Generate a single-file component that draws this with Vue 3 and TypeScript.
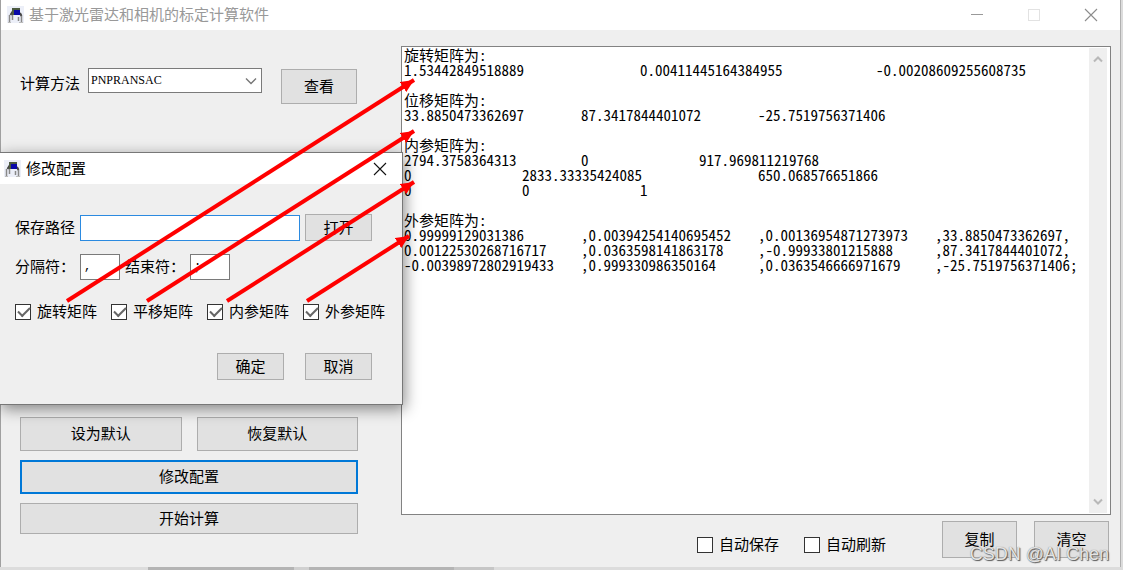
<script setup lang="ts">
import { reactive, ref } from 'vue'

interface Option {
  id: string
  label: string
  checked: boolean
}

const method = ref('PNPRANSAC')
const methods = ['PNPRANSAC']
const savePath = ref('')
const separator = ref(',')
const terminator = ref(';')

const outputs = reactive<Option[]>([
  { id: 'rotation', label: '旋转矩阵', checked: true },
  { id: 'translation', label: '平移矩阵', checked: true },
  { id: 'intrinsic', label: '内参矩阵', checked: true },
  { id: 'extrinsic', label: '外参矩阵', checked: true },
])

const autos = reactive<Option[]>([
  { id: 'auto-save', label: '自动保存', checked: false },
  { id: 'auto-refresh', label: '自动刷新', checked: false },
])

const result = ref(
  [
    '旋转矩阵为:',
    '1.53442849518889\t\t0.00411445164384955\t\t-0.00208609255608735',
    '',
    '位移矩阵为:',
    '33.8850473362697\t87.3417844401072\t-25.7519756371406',
    '',
    '内参矩阵为:',
    '2794.3758364313\t\t0\t\t917.969811219768',
    '0\t\t2833.33335424085\t\t650.068576651866',
    '0\t\t0\t\t1',
    '',
    '外参矩阵为:',
    '0.99999129031386\t,0.00394254140695452\t,0.00136954871273973\t,33.8850473362697,',
    '0.00122530268716717\t,0.0363598141863178\t,-0.99933801215888\t,87.3417844401072,',
    '-0.00398972802919433\t,0.999330986350164\t,0.0363546666971679\t,-25.7519756371406;',
  ].join('\n'),
)

const arrows = [
  { x1: 67, y1: 301, x2: 414, y2: 80 },
  { x1: 147, y1: 301, x2: 414, y2: 131 },
  { x1: 227, y1: 301, x2: 414, y2: 182 },
  { x1: 307, y1: 301, x2: 409, y2: 236 },
]
</script>

<template>
  <div class="desktop">
    <main class="window">
      <header class="titlebar">
        <svg class="app-icon" viewBox="0 0 18 18" aria-hidden="true">
          <rect x="1" y="0" width="17" height="17" fill="#eceff8" />
          <path d="M4.5 9 L7 5 M14 7 L15.5 10" stroke="#444" stroke-width="2" fill="none" />
          <path d="M3.5 9 V16 M6.5 9 V14 M12.5 11 V15 M15.5 10 V16" stroke="#888" stroke-width="1.5" fill="none" />
          <path d="M2 16.5 H5 M13 16.5 H17" stroke="#bbb" />
          <rect x="6" y="2" width="8" height="7" fill="#4c5a40" />
          <rect x="8" y="4" width="6" height="5" fill="#0808a8" />
        </svg>
        <h1 class="title muted">基于激光雷达和相机的标定计算软件</h1>
        <div class="caption">
          <button type="button" class="cap" aria-label="最小化">
            <svg viewBox="0 0 14 14"><path d="M1 6.5 H13" stroke="#999" /></svg>
          </button>
          <button type="button" class="cap" aria-label="最大化" disabled>
            <svg viewBox="0 0 14 14"><rect x="1.5" y="1.5" width="11" height="11" fill="none" stroke="#e2e2e2" /></svg>
          </button>
          <button type="button" class="cap" aria-label="关闭">
            <svg viewBox="0 0 14 14"><path d="M1 1 L13 13 M13 1 L1 13" stroke="#8c8c8c" stroke-width="1.1" /></svg>
          </button>
        </div>
      </header>

      <div class="content">
        <section class="controls">
          <div class="method">
            <label for="method">计算方法</label>
            <div class="combo">
              <select id="method" v-model="method">
                <option v-for="m in methods" :key="m">{{ m }}</option>
              </select>
              <svg class="chevron" viewBox="0 0 12 8" aria-hidden="true">
                <path d="M1 1.5 L6 6.5 L11 1.5" fill="none" stroke="#777" stroke-width="1.4" />
              </svg>
            </div>
            <button type="button" class="btn view">查看</button>
          </div>
          <div class="actions">
            <button type="button" class="btn">设为默认</button>
            <button type="button" class="btn">恢复默认</button>
            <button type="button" class="btn wide focused">修改配置</button>
            <button type="button" class="btn wide start">开始计算</button>
          </div>
        </section>

        <section class="output">
          <div class="result">
            <textarea v-model="result" aria-label="计算结果" wrap="off" spellcheck="false"></textarea>
            <div class="scroll">
              <svg viewBox="0 0 10 7" aria-hidden="true"><path d="M1 5.5 L5 1.5 L9 5.5" /></svg>
              <svg viewBox="0 0 10 7" aria-hidden="true"><path d="M1 1.5 L5 5.5 L9 1.5" /></svg>
            </div>
          </div>
          <footer class="bottom">
            <label v-for="a in autos" :key="a.id" class="check">
              <input v-model="a.checked" type="checkbox" />{{ a.label }}
            </label>
            <button type="button" class="btn big">复制</button>
            <button type="button" class="btn big">清空</button>
          </footer>
        </section>
      </div>
    </main>

    <section class="dialog" role="dialog" aria-labelledby="dialog-title">
      <header class="titlebar dialog-bar">
        <svg class="app-icon" viewBox="0 0 18 18" aria-hidden="true">
          <rect x="1" y="0" width="17" height="17" fill="#eceff8" />
          <path d="M4.5 9 L7 5 M14 7 L15.5 10" stroke="#444" stroke-width="2" fill="none" />
          <path d="M3.5 9 V16 M6.5 9 V14 M12.5 11 V15 M15.5 10 V16" stroke="#888" stroke-width="1.5" fill="none" />
          <path d="M2 16.5 H5 M13 16.5 H17" stroke="#bbb" />
          <rect x="6" y="2" width="8" height="7" fill="#4c5a40" />
          <rect x="8" y="4" width="6" height="5" fill="#0808a8" />
        </svg>
        <h2 id="dialog-title" class="title">修改配置</h2>
        <button type="button" class="cap close" aria-label="关闭">
          <svg viewBox="0 0 14 14"><path d="M1 1 L13 13 M13 1 L1 13" stroke="#111" stroke-width="1.1" /></svg>
        </button>
      </header>
      <form class="form" @submit.prevent>
        <div class="row path-row">
          <label for="path">保存路径</label>
          <input id="path" v-model="savePath" class="field path" type="text" />
          <button type="button" class="btn small">打开</button>
        </div>
        <div class="row mark-row">
          <label for="sep">分隔符：</label>
          <input id="sep" v-model="separator" class="field mark" type="text" />
          <label for="end">结束符：</label>
          <input id="end" v-model="terminator" class="field mark" type="text" />
        </div>
        <div class="row checks">
          <label v-for="o in outputs" :key="o.id" class="check">
            <input v-model="o.checked" type="checkbox" />{{ o.label }}
          </label>
        </div>
        <div class="row confirm">
          <button type="submit" class="btn small">确定</button>
          <button type="button" class="btn small">取消</button>
        </div>
      </form>
    </section>

    <svg class="arrows" width="430" height="310" aria-hidden="true">
      <defs>
        <marker id="head" markerUnits="userSpaceOnUse" markerWidth="14" markerHeight="12" refX="13" refY="6" orient="auto">
          <path d="M0 0 L13 6 L0 12 Z" fill="#f00" />
        </marker>
      </defs>
      <line v-for="(a, i) in arrows" :key="i" v-bind="a" stroke="#f00" stroke-width="4" marker-end="url(#head)" />
    </svg>

    <div class="watermark">CSDN @AI Chen</div>
  </div>
</template>

<style>
body {
  margin: 0;
}
</style>

<style scoped>
* {
  box-sizing: border-box;
}

.desktop {
  position: relative;
  display: flex;
  min-height: 100vh;
  padding: 0 2px 3px 0;
  overflow: hidden;
  background: linear-gradient(
    90deg,
    #dcdcdc 148px,
    #b4b4b4 148px 294px,
    #d0d0d0 294px 309px,
    #b4b4b4 309px 454px,
    #c6c6c6 454px 494px,
    #dcdcdc 494px
  );
  color: #000;
  font-family: "Liberation Sans", "Noto Sans CJK SC", sans-serif;
  font-size: 15px;
  line-height: 20px;
}

button,
input,
select,
textarea {
  margin: 0;
  border-radius: 0;
  color: inherit;
  font: inherit;
}

.window {
  display: flex;
  flex: 1;
  flex-direction: column;
  border-left: 1px solid #a0a0a0;
  border-right: 1px solid #b0b0b0;
  background: #efefef;
}

.titlebar {
  display: flex;
  align-items: center;
  height: 30px;
  padding-left: 5px;
  background: #fff;
}

.app-icon {
  width: 18px;
  height: 18px;
}

.title {
  margin: 0 0 0 5px;
  font-size: 15px;
  font-weight: 400;
}

.muted {
  color: #999;
}

.caption {
  display: flex;
  margin-left: auto;
  padding-right: 1px;
}

.cap {
  display: flex;
  align-items: center;
  justify-content: center;
  width: 57px;
  height: 30px;
  padding: 0;
  border: 0;
  background: transparent;
}

.cap svg {
  width: 14px;
  height: 14px;
}

.content {
  display: flex;
  flex: 1;
}

.controls {
  display: flex;
  flex: 0 0 400px;
  flex-direction: column;
  justify-content: space-between;
  padding: 38px 43px 33px 19px;
}

.method {
  display: flex;
  align-items: flex-start;
}

.method label {
  margin-top: 6px;
}

.combo {
  position: relative;
  width: 174px;
  margin: 0 19px 0 8px;
}

.combo select {
  display: block;
  width: 100%;
  height: 25px;
  padding: 0 24px 2px 2px;
  border: 1px solid #7a7a7a;
  appearance: none;
  background: #fff;
  font-family: "Liberation Serif", serif;
  font-size: 12px;
}

.chevron {
  position: absolute;
  top: 9px;
  right: 5px;
  width: 12px;
  height: 8px;
  pointer-events: none;
}

.btn {
  height: 34px;
  padding: 0;
  border: 1px solid #adadad;
  background: #e1e1e1;
}

.view {
  flex: 1;
  height: 35px;
  margin: 1px 1px 0 0;
}

.actions {
  display: grid;
  grid-template-columns: 1fr 1fr;
  gap: 9px 15px;
}

.wide {
  grid-column: span 2;
}

.start {
  height: 31px;
}

.focused {
  border: 2px solid #0078d7;
}

.output {
  display: flex;
  flex: 1;
  flex-direction: column;
  padding: 16px 9px 9px 0;
}

.result {
  display: flex;
  flex: 1;
  padding: 0 1px;
  border: 1px solid #828282;
  background: #fff;
}

.result textarea {
  flex: 1;
  min-width: 0;
  padding: 0 1px;
  border: 0;
  outline: 0;
  overflow: hidden;
  resize: none;
  background: transparent;
  font-family: "Noto Sans Mono CJK SC", "Noto Sans CJK SC", "Liberation Mono", monospace;
  font-size: 15px;
  font-feature-settings: "hwid";
  line-height: 15px;
  tab-size: 59px;
  white-space: pre;
}

.scroll {
  display: flex;
  flex-direction: column;
  align-items: center;
  justify-content: space-between;
  width: 18px;
  margin: 1px 2px 1px 0;
  padding: 8px 0;
  background: #efefef;
}

.scroll svg {
  width: 10px;
  height: 7px;
  fill: none;
  stroke: #b8b8b8;
  stroke-width: 2;
}

.bottom {
  display: flex;
  align-items: center;
  justify-content: flex-end;
  padding: 6px 2px 0 0;
}

.bottom .check {
  margin: 10px 25px 0 0;
}

.big {
  width: 75px;
  height: 37px;
}

.bottom .check + .check {
  margin-right: 56px;
}

.check + .big {
  margin-right: 17px;
}

.check {
  display: flex;
  align-items: center;
  gap: 6px;
  white-space: nowrap;
}

.check input {
  position: relative;
  width: 16px;
  height: 16px;
  border: 1px solid #333;
  appearance: none;
  background: #fff;
}

.check input:checked::after {
  position: absolute;
  top: 3px;
  left: 2px;
  width: 10px;
  height: 5px;
  border: solid #666;
  border-width: 0 0 2px 2px;
  content: "";
  transform: translateY(-1px) rotate(-45deg);
}

.dialog {
  position: absolute;
  top: 152px;
  left: 0;
  width: 403px;
  border: solid #777;
  border-width: 1px 1px 1px 0;
  background: #efefef;
  box-shadow: 2px 4px 14px rgba(0, 0, 0, 0.45);
}

.dialog-bar {
  height: 31px;
  padding-left: 3px;
}

.close {
  width: 44px;
  margin-left: auto;
}

.form {
  padding: 30px 15px 24px 15px;
}

.row {
  display: flex;
  align-items: center;
}

.path-row {
  gap: 5px;
  padding-right: 15px;
}

.field {
  height: 26px;
  padding: 0 3px;
  border: 1px solid #7a7a7a;
  outline: 0;
  background: #fff;
  font-family: "Liberation Mono", monospace;
  font-size: 12px;
}

.path {
  flex: 1;
  border-color: #2b8ae0;
}

.small {
  width: 67px;
  height: 27px;
}

.mark-row {
  gap: 5px;
  margin-top: 13px;
}

.mark {
  width: 40px;
}

.checks {
  gap: 14px;
  margin: 22px 0 31px;
}

.confirm {
  justify-content: flex-end;
  gap: 21px;
  padding-right: 15px;
}

.arrows {
  position: absolute;
  top: 0;
  left: 0;
  pointer-events: none;
}

.watermark {
  position: absolute;
  right: 14px;
  bottom: 6px;
  color: #e4e4e4;
  font-size: 18px;
  text-shadow: 1px 1px 1px #555, 0 0 1px #777;
  pointer-events: none;
}
</style>
